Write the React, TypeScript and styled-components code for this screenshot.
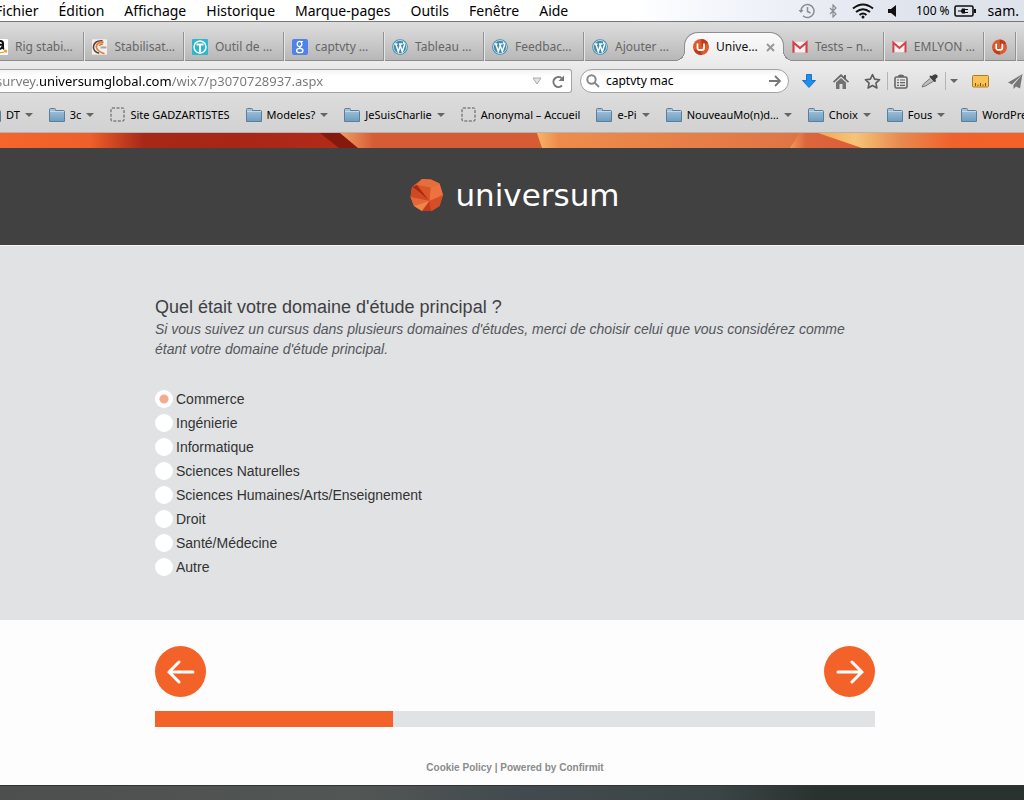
import React from "react";
import styled, { createGlobalStyle, css } from "styled-components";

const lucida = `"Noto Sans", "Open Sans", sans-serif`;
const helvetica = `"Liberation Sans", Arial, sans-serif`;
const orange = "#f26229";
const panel = "#e0e2e4";

const GlobalStyle = createGlobalStyle`
  *, *::before, *::after { box-sizing: border-box; }
  body { margin: 0; background: #fff; font-family: ${helvetica}; }
  button, input { font: inherit; }
`;

const Screen = styled.div`
  display: flex;
  flex-direction: column;
  min-height: 100vh;
  overflow: hidden;
`;

const MenuBar = styled.header`
  display: flex;
  align-items: center;
  justify-content: space-between;
  height: 22px;
  overflow: hidden;
  font: 14px/22px ${lucida};
  color: #000;
  background: linear-gradient(90deg, #fff 0 62%, #f4f6fc 70%, #dfe3ec 90%);
  border-bottom: 1px solid #777;
`;
const MenuList = styled.nav`
  display: flex;
  gap: 20px;
  margin-left: -5px;
`;
const MenuItem = styled.button`
  padding: 0;
  border: 0;
  background: none;
  color: inherit;
  white-space: nowrap;
`;
const StatusList = styled.div`
  display: flex;
  align-items: center;
  gap: 12px;
  padding-right: 5px;
  white-space: nowrap;
`;
const StatusIcons = styled.div`
  display: flex;
  align-items: center;
  gap: 14px;
  padding-right: 8px;
`;
const StatusText = styled.span<{ $small?: boolean }>`
  font-size: ${(p) => (p.$small ? 12 : 14)}px;
`;
const Power = styled.span`
  display: flex;
  align-items: center;
  gap: 4px;
`;

const TabStrip = styled.div`
  display: flex;
  align-items: flex-end;
  height: 39px;
  overflow: hidden;
  padding-top: 10px;
  background: linear-gradient(#dedede, #cfcfcf 40%, #b6b6b6);
  box-shadow: inset 0 -1px #8c8c8c;
`;
const tabBase = css`
  display: flex;
  align-items: center;
  gap: 7px;
  flex: none;
  height: 29px;
  padding: 0 8px;
  border: 0;
  font: 12px/16px ${lucida};
  white-space: nowrap;
`;
const Tab = styled.button<{ $first?: boolean; $plain?: boolean; $narrow?: boolean }>`
  ${tabBase}
  width: ${(p) => (p.$narrow ? 32 : 100)}px;
  margin-left: ${(p) => (p.$first ? "-16px" : "0")};
  color: #666;
  background: none;
  border-right: 1px solid ${(p) => (p.$plain ? "transparent" : "#929292")};
  box-shadow: ${(p) => (p.$plain ? "none" : "1px 0 #e6e6e6")};
`;
const ActiveTab = styled.button`
  ${tabBase}
  position: relative;
  width: 100px;
  color: #111;
  background: linear-gradient(#fafafa, #ececec);
  border: 1px solid #8f8f8f;
  border-bottom: 0;
  border-radius: 14px 14px 0 0;
  &::before,
  &::after {
    content: "";
    position: absolute;
    bottom: 0;
    width: 10px;
    height: 10px;
  }
  &::before {
    left: -10px;
    background: radial-gradient(circle at 0 0, transparent 9px, #8f8f8f 9px 10px, #ececec 10px);
  }
  &::after {
    right: -10px;
    background: radial-gradient(circle at 100% 0, transparent 9px, #8f8f8f 9px 10px, #ececec 10px);
  }
`;
const TabTitle = styled.span`
  flex: 1;
  text-align: left;
`;

const Toolbar = styled.div`
  display: flex;
  align-items: center;
  height: 40px;
  overflow: hidden;
  background: linear-gradient(#ececec, #dadada);
`;
const UrlField = styled.div`
  display: flex;
  align-items: center;
  gap: 10px;
  flex: 1;
  height: 24px;
  padding-right: 6px;
  background: linear-gradient(#f4f4f4, #fff 30%);
  border: 1px solid #a3a3a3;
  border-left: 0;
  border-radius: 0 3px 3px 0;
`;
const UrlInput = styled.input`
  flex: 1;
  min-width: 0;
  margin-left: -4px;
  padding: 0;
  border: 0;
  outline: 0;
  font: 13px/20px ${lucida};
  color: transparent;
  background: linear-gradient(90deg, #777 0 42px, #000 42px 175px, #777 175px);
  background-clip: text;
  -webkit-background-clip: text;
`;
const SearchField = styled.label`
  display: flex;
  align-items: center;
  gap: 6px;
  width: 209px;
  height: 24px;
  margin-left: 8px;
  padding: 0 7px 0 5px;
  background: linear-gradient(#f4f4f4, #fff 30%);
  border: 1px solid #a3a3a3;
  border-radius: 12px;
`;
const SearchInput = styled.input`
  flex: 1;
  min-width: 0;
  padding: 0;
  border: 0;
  outline: 0;
  background: none;
  font: 12px/20px ${lucida};
  color: #000;
`;
const Tools = styled.div`
  display: flex;
  align-items: center;
  margin: 0 -7px 0 4px;
`;
const IconButton = styled.button<{ $width?: number }>`
  display: flex;
  align-items: center;
  justify-content: center;
  flex: none;
  width: ${(p) => p.$width ?? 32}px;
  height: 24px;
  padding: 0;
  border: 0;
  background: none;
`;
const ToolDivider = styled.span`
  width: 1px;
  height: 18px;
  background: #b4b4b4;
`;

const BookmarkBar = styled.nav`
  display: flex;
  align-items: center;
  gap: 16px;
  height: 32px;
  padding-bottom: 4px;
  overflow: hidden;
  background: linear-gradient(#dadada, #d2d2d2);
  border-bottom: 1px solid #b5b5b5;
`;
const Bookmark = styled.a<{ $first?: boolean }>`
  display: flex;
  align-items: center;
  gap: 5px;
  flex: none;
  margin-left: ${(p) => (p.$first ? "-15px" : "0")};
  font: 11px/16px ${lucida};
  color: #000;
  text-decoration: none;
  white-space: nowrap;
`;

const Banner = styled.div`
  height: 15px;
  overflow: hidden;
  svg {
    display: block;
    width: 100%;
    height: 15px;
  }
`;
const BrandHeader = styled.header`
  display: flex;
  align-items: center;
  justify-content: center;
  gap: 11px;
  height: 97px;
  padding: 0 0 4px 6px;
  background: #414141;
`;
const Wordmark = styled.span`
  font: 31px/36px "DejaVu Sans", sans-serif;
  color: #fff;
`;

const Question = styled.main`
  flex: 1;
  padding: 51px 18px 41px 24px;
  background: ${panel};
  border-top: 1px solid #f4f4f4;
`;
const Column = styled.div`
  max-width: 720px;
  margin: 0 auto;
`;
const QuestionTitle = styled.h1`
  margin: 0 0 2px;
  font: 18px/20px ${helvetica};
  color: #3f4042;
`;
const Hint = styled.p`
  max-width: 700px;
  margin: 0 0 28px;
  font: italic 14px/20px ${helvetica};
  color: #55575b;
`;
const Options = styled.fieldset`
  margin: 0;
  padding: 0;
  border: 0;
`;
const Option = styled.label`
  display: flex;
  align-items: center;
  gap: 3px;
  height: 24px;
  font: 14px/24px ${helvetica};
  color: #333;
`;
const Radio = styled.input`
  appearance: none;
  width: 18px;
  height: 18px;
  margin: 0;
  border-radius: 50%;
  background: #fff;
  &:checked {
    background: radial-gradient(circle, #f4ab90 4px, #fff 5px);
  }
`;

const Footer = styled.footer`
  padding: 26px 18px 9px 24px;
  background: #fdfdfd;
`;
const NavRow = styled.div`
  display: flex;
  justify-content: space-between;
  margin-bottom: 14px;
`;
const RoundButton = styled.button`
  display: flex;
  align-items: center;
  justify-content: center;
  width: 51px;
  height: 51px;
  padding: 0;
  border: 0;
  border-radius: 50%;
  background: ${orange};
`;
const Track = styled.div`
  height: 16px;
  background: ${panel};
`;
const Fill = styled.div`
  height: 16px;
  background: ${orange};
`;
const Legal = styled.p`
  margin: 33px 0 0;
  font: bold 10px/16px ${helvetica};
  text-align: center;
  color: #8b8b8b;
`;
const LegalLink = styled.a`
  color: inherit;
  text-decoration: none;
`;
const Desktop = styled.div`
  height: 15px;
  background: linear-gradient(90deg, #4c4f4d, #525654 35%, #434b50 50%, #3b4446 70%, #2a322f 80%);
  border-top: 1px solid #333;
`;

const Caret = () => (
  <svg width="8" height="6" viewBox="0 0 8 6" aria-hidden="true">
    <path d="M0 1h8L4 5z" fill="#666" />
  </svg>
);
const Folder = () => (
  <svg width="16" height="16" viewBox="0 0 16 16" aria-hidden="true">
    <defs>
      <linearGradient id="folder" x2="0" y2="1">
        <stop offset="0" stopColor="#a9c6dc" />
        <stop offset="1" stopColor="#6c9cc0" />
      </linearGradient>
    </defs>
    <path d="M.5 14.500V2.500q0-1 1-1h4q1 0 1 1v1h8q1 0 1 1v10z" fill="url(#folder)" stroke="#5b7f9b" />
    <path d="M1 4.500h14" stroke="#c3d9e8" />
  </svg>
);
const Blank = () => (
  <svg width="15" height="15" viewBox="0 0 15 15" aria-hidden="true">
    <rect x="1" y="1" width="13" height="13" rx="1" fill="none" stroke="#555" strokeDasharray="3 1.500" />
  </svg>
);

const WordPress = () => (
  <svg width="16" height="16" viewBox="0 0 16 16" aria-hidden="true">
    <circle cx="8" cy="8" r="7.800" fill="#3f8cb0" />
    <circle cx="8" cy="8" r="6.600" fill="none" stroke="#cfe3ec" strokeWidth=".8" />
    <path d="M2.500 5h3M7 5h3.500M3.800 5l2.500 7.500L8.200 7M7.700 5l2.600 7.500L12.500 6q0-2-1.500-2.500" fill="none" stroke="#fff" strokeWidth="1.500" />
  </svg>
);
const Gmail = () => (
  <svg width="16" height="16" viewBox="0 0 16 16" aria-hidden="true">
    <rect x="1" y="2.500" width="14" height="11" fill="#f7f2f1" stroke="#d8c8c6" strokeWidth=".6" />
    <path d="M1.500 13.800V3.500L8 9l6.500-5.500v10.300" fill="none" stroke="#d3424a" strokeWidth="2.200" />
  </svg>
);
const UniversumIcon = () => (
  <svg width="16" height="16" viewBox="0 0 16 16" aria-hidden="true">
    <circle cx="8" cy="8" r="8" fill="#dd5a2c" />
    <path d="M8 0a8 8 0 0 1 7 4L9 8zM1 11l6-2 2 7q-6 0-8-5z" fill="#c23a1b" />
    <path d="M4.500 4.500V9q0 2 2 2h2.500q2 0 2-2V4.500" fill="none" stroke="#fff" strokeWidth="1.800" />
  </svg>
);
const Amazon = () => (
  <svg width="16" height="16" viewBox="0 0 16 16" aria-hidden="true">
    <rect width="16" height="16" rx="1" fill="#fff" />
    <path d="M5.500 4.500Q6 2 8.500 2 11 2 11 4.500V8q0 1.500 1 2M11 5.500Q5.500 5.500 5.500 8q0 2 2 2T11 7" fill="none" stroke="#111" strokeWidth="2" />
    <path d="M2 11.500q6 4 12 .5M12 11l2.500.6-.8 2.200" fill="none" stroke="#f0a020" strokeWidth="1.300" />
  </svg>
);
const Swirl = () => (
  <svg width="16" height="16" viewBox="0 0 16 16" aria-hidden="true">
    <rect width="16" height="16" fill="#f3efec" />
    <path d="M11 1.500Q2 1 1.500 8q0 5 6 6.500" fill="none" stroke="#5a4038" strokeWidth="1.600" />
    <path d="M12 3Q4.500 3 4.500 8q.5 4.500 8.500 7M7.500 7q1-2.500 4-2" fill="none" stroke="#df7c43" strokeWidth="1.800" />
    <path d="M9 8.500h6" stroke="#a9a19c" strokeWidth="2" />
  </svg>
);
const Teal = () => (
  <svg width="16" height="16" viewBox="0 0 16 16" aria-hidden="true">
    <rect width="16" height="16" rx="1" fill="#2fb5cd" />
    <circle cx="8" cy="8" r="6" fill="none" stroke="#fff" strokeWidth="1.400" />
    <path d="M4.500 5.500h7M8 5.500V13" stroke="#fff" strokeWidth="2" />
  </svg>
);
const Google = () => (
  <svg width="16" height="16" viewBox="0 0 16 16" aria-hidden="true">
    <rect width="16" height="16" rx="2" fill="#4f83ea" />
    <ellipse cx="7.500" cy="5" rx="2.300" ry="2.600" fill="none" stroke="#fff" strokeWidth="1.300" />
    <ellipse cx="7.800" cy="11.500" rx="3.200" ry="2.200" fill="none" stroke="#fff" strokeWidth="1.300" />
    <path d="M8 2.500h3M9 7q-2 1-1 2l2 1" fill="none" stroke="#fff" strokeWidth="1.200" />
  </svg>
);

const GemLogo = () => (
  <svg width="34" height="34" viewBox="0 0 34 34" aria-hidden="true">
    <path d="M12 1l9 .5 8.500 4L33 17l-3.500 11-8 5H12l-8-5-3.500-9L2 9z" fill="#e2602f" />
    <path d="M12 1l9 .5 8.500 4-9 4L7 7z" fill="#e66e3c" />
    <path d="M20.500 9.500l9-4L33 17l-13.500 6z" fill="#ec7240" />
    <path d="M7 7l13.500 2.500-1 13.500z" fill="#dc5529" />
    <path d="M2 9l5-2 12.500 16L9 14z" fill="#a92a12" />
    <path d="M2 9l7 5 10.500 9L.5 19z" fill="#cf4a24" />
    <path d="M.5 19l19 4L4 28z" fill="#e4673a" />
    <path d="M4 28l15.500-5L12 33z" fill="#f0844f" />
    <path d="M19.500 23l2 10H12z" fill="#c23c1b" />
    <path d="M19.500 23L33 17l-3.500 11-8 5z" fill="#d54e26" />
  </svg>
);

const ArrowLeft = () => (
  <svg width="28" height="24" viewBox="0 0 28 24" aria-hidden="true">
    <path d="M26 12H2M12 2L2 12l10 10" fill="none" stroke="#fff" strokeWidth="3" strokeLinecap="round" />
  </svg>
);
const ArrowRight = () => (
  <svg width="28" height="24" viewBox="0 0 28 24" aria-hidden="true">
    <path d="M2 12h24M16 2l10 10-10 10" fill="none" stroke="#fff" strokeWidth="3" strokeLinecap="round" />
  </svg>
);

const menus = ["Fichier", "Édition", "Affichage", "Historique", "Marque-pages", "Outils", "Fenêtre", "Aide"];

const tabsBefore = [
  { title: "Rig stabi…", icon: <Amazon /> },
  { title: "Stabilisat…", icon: <Swirl /> },
  { title: "Outil de …", icon: <Teal /> },
  { title: "captvty …", icon: <Google /> },
  { title: "Tableau …", icon: <WordPress /> },
  { title: "Feedbac…", icon: <WordPress /> },
  { title: "Ajouter …", icon: <WordPress /> },
];
const tabsAfter = [
  { title: "Tests – n…", icon: <Gmail /> },
  { title: "EMLYON …", icon: <Gmail /> },
];

const bookmarks = [
  { label: "DT", folder: true },
  { label: "3c", folder: true },
  { label: "Site GADZARTISTES", folder: false },
  { label: "Modeles?", folder: true },
  { label: "JeSuisCharlie", folder: true },
  { label: "Anonymal – Accueil", folder: false },
  { label: "e-Pi", folder: true },
  { label: "NouveauMo(n)d…", folder: true },
  { label: "Choix", folder: true },
  { label: "Fous", folder: true },
  { label: "WordPress", folder: true },
];

const options = [
  "Commerce",
  "Ingénierie",
  "Informatique",
  "Sciences Naturelles",
  "Sciences Humaines/Arts/Enseignement",
  "Droit",
  "Santé/Médecine",
  "Autre",
];

const progress = 33;

export default function App() {
  return (
    <Screen>
      <GlobalStyle />
      <MenuBar>
        <MenuList aria-label="Menus">
          {menus.map((m) => (
            <MenuItem key={m}>{m}</MenuItem>
          ))}
        </MenuList>
        <StatusList>
          <StatusIcons>
            <svg width="17" height="16" viewBox="0 0 17 16" fill="none" stroke="#8b8d92" strokeWidth="1.500" aria-hidden="true">
              <path d="M3 8a6.500 6.500 0 1 1 2 4.700M9.500 4v4.500l3 1.500" />
              <path d="M.5 7h5L3 10z" fill="#8b8d92" stroke="none" />
            </svg>
            <svg width="9" height="14" viewBox="0 0 9 14" fill="none" stroke="#8b8d92" strokeWidth="1.200" aria-hidden="true">
              <path d="M1 4l6 6-3 3V1l3 3-6 6" />
            </svg>
            <svg width="22" height="16" viewBox="0 0 22 16" fill="none" stroke="#111" strokeWidth="2" aria-hidden="true">
              <path d="M1 5.500q10-8 20 0M4 9q7-5.500 14 0M7.500 12q3.500-3 7 0" />
              <circle cx="11" cy="14" r="1.500" fill="#111" stroke="none" />
            </svg>
            <svg width="8" height="12" viewBox="0 0 8 12" aria-hidden="true">
              <path d="M0 4h3l5-4v12L3 8H0z" fill="#111" />
            </svg>
          </StatusIcons>
          <Power>
            <StatusText $small>100 %</StatusText>
            <svg width="22" height="12" viewBox="0 0 22 12" aria-hidden="true">
              <rect x="1" y="1" width="18" height="10" rx="1.500" fill="none" stroke="#111" strokeWidth="1.600" />
              <path d="M20 4h2v4h-2zM4 5.500h3l1-2h3v5H8l-1-2H4zM11 4h3v1h-3zM11 7h3v1h-3z" fill="#111" />
            </svg>
          </Power>
          <StatusText>sam.</StatusText>
        </StatusList>
      </MenuBar>

      <TabStrip>
        {tabsBefore.map((t, i) => (
          <Tab key={t.title} $first={i === 0} $plain={i === tabsBefore.length - 1}>
            {t.icon}
            <TabTitle>{t.title}</TabTitle>
          </Tab>
        ))}
        <ActiveTab aria-current="page">
          <UniversumIcon />
          <TabTitle>Unive…</TabTitle>
          <svg width="9" height="9" viewBox="0 0 9 9" aria-hidden="true">
            <path d="M1 1l7 7M8 1L1 8" stroke="#999" strokeWidth="2" />
          </svg>
        </ActiveTab>
        {tabsAfter.map((t) => (
          <Tab key={t.title}>
            {t.icon}
            <TabTitle>{t.title}</TabTitle>
          </Tab>
        ))}
        <Tab $narrow aria-label="Universum">
          <UniversumIcon />
        </Tab>
      </TabStrip>

      <Toolbar>
        <UrlField>
          <UrlInput aria-label="Adresse" defaultValue="survey.universumglobal.com/wix7/p3070728937.aspx" />
          <svg width="10" height="8" viewBox="0 0 10 8" aria-hidden="true">
            <path d="M1 1h8L5 7z" fill="#e4e4e4" stroke="#aaa" />
          </svg>
          <svg width="13" height="13" viewBox="0 0 13 13" aria-hidden="true">
            <path d="M10 10.500A5 5 0 1 1 9.500 3" fill="none" stroke="#777" strokeWidth="2" />
            <path d="M12 .5v5.500H6.500z" fill="#777" />
          </svg>
        </UrlField>
        <SearchField>
          <svg width="14" height="14" viewBox="0 0 14 14" fill="none" stroke="#888" strokeWidth="2" aria-hidden="true">
            <circle cx="5.500" cy="5.500" r="4.200" />
            <path d="M8.500 8.500L13 13" />
          </svg>
          <SearchInput aria-label="Rechercher" defaultValue="captvty mac" />
          <svg width="12" height="12" viewBox="0 0 12 12" fill="none" stroke="#777" strokeWidth="1.800" aria-hidden="true">
            <path d="M0 6h10M6 1l5 5-5 5" />
          </svg>
        </SearchField>
        <Tools>
          <IconButton aria-label="Téléchargements">
            <svg width="14" height="14" viewBox="0 0 14 14">
              <path d="M4.500.5h5v6h4L7 13.500.5 6.500h4z" fill="#1f8df0" stroke="#1773cc" />
            </svg>
          </IconButton>
          <IconButton aria-label="Accueil">
            <svg width="16" height="15" viewBox="0 0 16 15">
              <path d="M8 0l3 2.800V1h2v3.800L16 7.500l-1 1.200L8 2.500 1 8.700l-1-1.200z" fill="#666" />
              <path d="M8 4l5 4.500V15H9.500v-5h-3v5H3V8.500z" fill="#727272" />
            </svg>
          </IconButton>
          <IconButton aria-label="Marquer cette page" $width={30}>
            <svg width="17" height="16" viewBox="0 0 17 16">
              <path d="M8.500 1.500l2.100 4.600 5 .6-3.700 3.400 1 4.900-4.400-2.500L4.100 15l1-4.900L1.400 6.700l5-.6z" fill="none" stroke="#5e5e5e" strokeWidth="1.600" strokeLinejoin="round" />
            </svg>
          </IconButton>
          <ToolDivider />
          <IconButton aria-label="Liste de lecture" $width={26}>
            <svg width="14" height="15" viewBox="0 0 14 15">
              <rect x="1" y="3" width="12" height="11" rx="1.500" fill="none" stroke="#666" strokeWidth="1.600" />
              <path d="M4 3V1.500Q7-.5 10 1.500V3z" fill="#666" />
              <path d="M3 6h2M6 6h5M3 8.700h2M6 8.700h5M3 11.400h2M6 11.400h5" stroke="#666" strokeWidth="1.200" />
            </svg>
          </IconButton>
          <IconButton aria-label="Pipette" $width={31}>
            <svg width="17" height="14" viewBox="0 0 17 14">
              <path d="M9 1.500l2 .5Q14-1 16 1t-1.500 4l.5 2.500L13 8 8.500 3z" fill="#3f3f3f" />
              <path d="M9 4.500L2.500 10 1 13l3.500-1L12 7.500" fill="#bdbdbd" stroke="#777" />
            </svg>
          </IconButton>
          <ToolDivider />
          <IconButton aria-label="Options de la pipette" $width={15}>
            <Caret />
          </IconButton>
          <IconButton aria-label="Règle" $width={38}>
            <svg width="17" height="13" viewBox="0 0 17 13">
              <rect x=".5" y=".5" width="16" height="11.500" rx="1" fill="#f8c355" stroke="#b07a22" />
              <path d="M3.500 8v3M6 9.500V11M8.500 8v3M11 9.500V11M13.500 8v3" stroke="#7a5010" />
            </svg>
          </IconButton>
          <IconButton aria-label="Partager">
            <svg width="15" height="15" viewBox="0 0 15 15">
              <path d="M14.500 0L0 8.500l4 2zM14.500 0L5.500 11v4l2.500-2.500 4 2z" fill="#777" />
            </svg>
          </IconButton>
        </Tools>
      </Toolbar>

      <BookmarkBar aria-label="Marque-pages">
        {bookmarks.map((b, i) => (
          <Bookmark key={b.label} href="#" $first={i === 0}>
            {b.folder ? <Folder /> : <Blank />}
            {b.label}
            {b.folder && <Caret />}
          </Bookmark>
        ))}
      </BookmarkBar>

      <Banner>
        <svg viewBox="0 0 1024 15" preserveAspectRatio="none" aria-hidden="true">
          <defs>
            <linearGradient id="flare">
              <stop offset="0" stopColor="#f4662c" />
              <stop offset=".25" stopColor="#ee5f2a" />
              <stop offset=".4" stopColor="#a62817" />
              <stop offset=".65" stopColor="#a82616" />
              <stop offset="1" stopColor="#b42c18" />
            </linearGradient>
            <linearGradient id="mid">
              <stop offset="0" stopColor="#f0a060" />
              <stop offset=".16" stopColor="#d65c36" />
              <stop offset="1" stopColor="#d65c34" />
            </linearGradient>
            <linearGradient id="light">
              <stop offset="0" stopColor="#f7b468" />
              <stop offset=".08" stopColor="#ee8c4c" />
              <stop offset="1" stopColor="#de7444" />
            </linearGradient>
            <linearGradient id="sheen">
              <stop offset="0" stopColor="#ee9a58" />
              <stop offset=".2" stopColor="#dc663c" />
              <stop offset="1" stopColor="#dc5c34" />
            </linearGradient>
            <linearGradient id="glow">
              <stop offset="0" stopColor="#f4a850" />
              <stop offset=".18" stopColor="#f6c478" />
              <stop offset=".4" stopColor="#e88a50" />
              <stop offset=".65" stopColor="#f0622c" />
              <stop offset="1" stopColor="#f4622a" />
            </linearGradient>
          </defs>
          <rect width="1024" height="15" fill="#d65c34" />
          <path d="M0 0h345l15 15H0z" fill="url(#flare)" />
          <path d="M320 0h21l18 15h-20z" fill="#86190d" />
          <path d="M340 0h210v15H358z" fill="url(#mid)" />
          <path d="M537 0h270v15H542z" fill="url(#light)" />
          <path d="M800 0h70v15h-80z" fill="url(#sheen)" />
          <path d="M818 0h206v15H862z" fill="url(#glow)" />
        </svg>
      </Banner>
      <BrandHeader>
        <GemLogo />
        <Wordmark>universum</Wordmark>
      </BrandHeader>

      <Question>
        <Column>
          <QuestionTitle>Quel était votre domaine d'étude principal ?</QuestionTitle>
          <Hint>
            Si vous suivez un cursus dans plusieurs domaines d'études, merci de choisir celui que vous considérez comme
            étant votre domaine d'étude principal.
          </Hint>
          <Options aria-label="Domaine d'étude principal">
            {options.map((o, i) => (
              <Option key={o}>
                <Radio type="radio" name="domaine" defaultChecked={i === 0} />
                {o}
              </Option>
            ))}
          </Options>
        </Column>
      </Question>

      <Footer>
        <Column>
          <NavRow>
            <RoundButton aria-label="Précédent">
              <ArrowLeft />
            </RoundButton>
            <RoundButton aria-label="Suivant">
              <ArrowRight />
            </RoundButton>
          </NavRow>
          <Track role="progressbar" aria-label="Progression" aria-valuenow={progress}>
            <Fill style={{ width: `${progress}%` }} />
          </Track>
          <Legal>
            <LegalLink href="#">Cookie Policy</LegalLink> | <LegalLink href="#">Powered by Confirmit</LegalLink>
          </Legal>
        </Column>
      </Footer>
      <Desktop />
    </Screen>
  );
}
